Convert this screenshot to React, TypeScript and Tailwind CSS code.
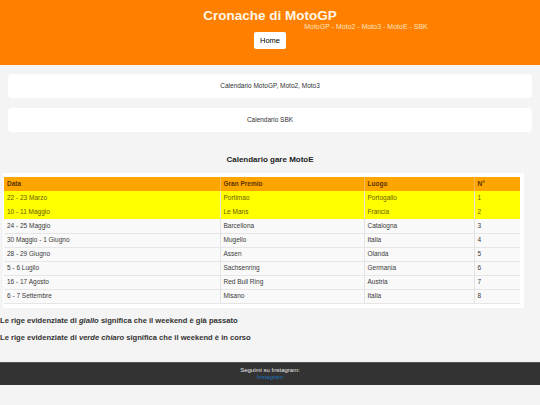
const gare = [
  { data: "22 - 23 Marzo", gp: "Portimao", luogo: "Portogallo", n: 1, passata: true },
  { data: "10 - 11 Maggio", gp: "Le Mans", luogo: "Francia", n: 2, passata: true },
  { data: "24 - 25 Maggio", gp: "Barcellona", luogo: "Catalogna", n: 3 },
  { data: "30 Maggio - 1 Giugno", gp: "Mugello", luogo: "Italia", n: 4 },
  { data: "28 - 29 Giugno", gp: "Assen", luogo: "Olanda", n: 5 },
  { data: "5 - 6 Luglio", gp: "Sachsenring", luogo: "Germania", n: 6 },
  { data: "16 - 17 Agosto", gp: "Red Bull Ring", luogo: "Austria", n: 7 },
  { data: "6 - 7 Settembre", gp: "Misano", luogo: "Italia", n: 8 },
]

const td = "h-[14px] px-[3px] text-left align-middle font-normal border-r border-[#e4e4e4] last:border-r-0"
const th = "h-[14px] px-[3px] text-left align-middle font-bold border-r border-[#f3b850] last:border-r-0"

export default function App() {
  return (
    <div className="min-h-[405px] bg-[#f4f4f4] font-['Liberation_Sans',Arial,sans-serif] text-[#333]">
      <header className="flex h-[65px] flex-col items-center bg-[#ff8000] pt-[7px]">
        <h1 className="text-[13.5px] font-bold leading-[17px] text-[#fff6e6]">Cronache di MotoGP</h1>
        <p className="-mt-[1px] ml-[192px] text-[7px] leading-[8px] text-[#ffe2bf]">
          MotoGP - Moto2 - Moto3 - MotoE - SBK
        </p>
        <button className="mt-[1px] h-[17px] rounded-[2px] bg-white px-[6px] text-[7.5px] text-black">
          Home
        </button>
      </header>

      <nav className="flex flex-col gap-[10px] px-[8px] pt-[9px]">
        <a className="flex h-[24px] items-center justify-center rounded-[4px] bg-white text-[6.5px] text-[#333]">
          Calendario MotoGP, Moto2, Moto3
        </a>
        <a className="flex h-[24px] items-center justify-center rounded-[4px] bg-white text-[6.5px] text-[#333]">
          Calendario SBK
        </a>
      </nav>

      <h2 className="mt-[23px] text-center text-[8px] font-bold leading-[10px] text-[#222]">
        Calendario gare MotoE
      </h2>

      <div className="mt-[8px] ml-[3px] w-[521px] bg-white px-[1px] py-[4px]">
        <table className="w-[516px] border-collapse text-[6.5px] text-[#3a3a3a]">
          <thead>
            <tr className="bg-[#ffa500] text-[#5a3300]">
              <th className={`${th} w-[216px]`}>Data</th>
              <th className={`${th} w-[144px]`}>Gran Premio</th>
              <th className={`${th} w-[110px]`}>Luogo</th>
              <th className={th}>N°</th>
            </tr>
          </thead>
          <tbody>
            {gare.map((g) => (
              <tr
                key={g.n}
                className={g.passata ? "bg-[#ffff00] text-[#6b5a00]" : "border-b border-[#e6e6e6] bg-[#f9f9f9]"}
              >
                <td className={td}>{g.data}</td>
                <td className={td}>{g.gp}</td>
                <td className={td}>{g.luogo}</td>
                <td className={td}>{g.n}</td>
              </tr>
            ))}
          </tbody>
        </table>
      </div>

      <div className="mt-[8px] flex flex-col gap-[8px] text-[7.6px] font-bold leading-[9px] text-[#333]">
        <p>
          Le rige evidenziate di <i>giallo</i> significa che il weekend è già passato
        </p>
        <p>
          Le rige evidenziate di <i>verde chiaro</i> significa che il weekend è in corso
        </p>
      </div>

      <footer className="mt-[20px] flex h-[23px] flex-col items-center justify-center border-t border-[#555] bg-[#333] text-[6px] leading-[7px]">
        <span className="text-[#e8e8e8]">Seguimi su Instagram:</span>
        <a className="text-[#1e6fb8]">Instagram</a>
      </footer>
    </div>
  )
}
